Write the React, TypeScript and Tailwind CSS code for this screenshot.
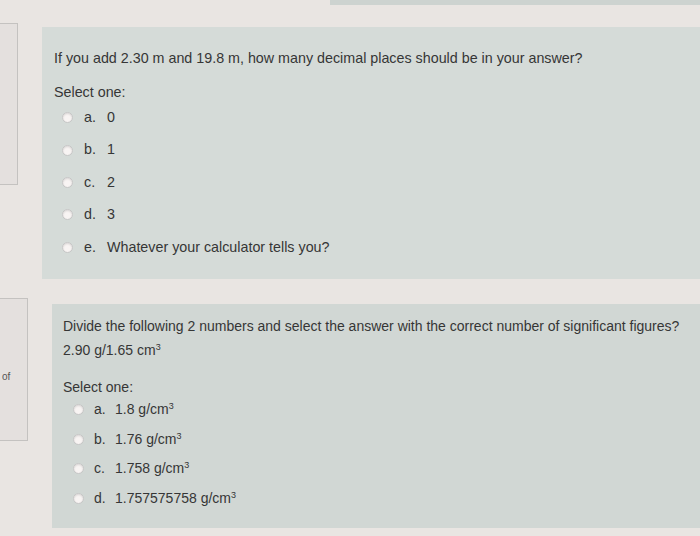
const font = { fontFamily: '"Liberation Sans", Arial, sans-serif' };

type Choice = { letter: string; text: React.ReactNode };

function Cm3({ value }: { value: string }) {
  return (
    <>
      {value} g/cm<sup className="text-[9px] relative -top-[5px]">3</sup>
    </>
  );
}

const firstChoices: Choice[] = [
  { letter: 'a.', text: '0' },
  { letter: 'b.', text: '1' },
  { letter: 'c.', text: '2' },
  { letter: 'd.', text: '3' },
  { letter: 'e.', text: 'Whatever your calculator tells you?' },
];

const secondChoices: Choice[] = [
  { letter: 'a.', text: <Cm3 value="1.8" /> },
  { letter: 'b.', text: <Cm3 value="1.76" /> },
  { letter: 'c.', text: <Cm3 value="1.758" /> },
  { letter: 'd.', text: <Cm3 value="1.757575758" /> },
];

function Radio() {
  return (
    <span className="inline-block w-[11px] h-[11px] shrink-0 rounded-full bg-[#f8f4f3] border border-[#c6c6c6] shadow-[inset_0_1px_2px_rgba(0,0,0,0.12)]" />
  );
}

function ChoiceRow({ choice, letterW }: { choice: Choice; letterW: string }) {
  return (
    <div className="flex items-center">
      <Radio />
      <span className={`${letterW} shrink-0`}>{choice.letter}</span>
      <span>{choice.text}</span>
    </div>
  );
}

export default function App() {
  return (
    <div className="w-[700px] h-[536px] overflow-hidden bg-[#e9e5e2] text-[#363636]" style={font}>
      <div className="h-[5px] ml-[330px] bg-[#cdd3d0]" />

      <div className="flex mt-[17px]">
        <div className="w-[18px] h-[162px] border border-l-0 border-[#c4c2c0] bg-[#e4e0de] mt-[1px] shrink-0" />
        <div className="ml-[24px] flex-1 h-[252px] mt-[5px] bg-[#d5dbd8] pl-[12px] pt-[21px] text-[14.3px]">
          <p>If you add 2.30 m and 19.8 m, how many decimal places should be in your answer?</p>
          <p className="mt-[13px]">Select one:</p>
          <div className="mt-[3px] flex flex-col gap-[11px] pl-[8px]">
            {firstChoices.map((c) => (
              <ChoiceRow key={c.letter} choice={c} letterW="w-[34px] pl-[11px]" />
            ))}
          </div>
        </div>
      </div>

      <div className="flex mt-[19px]">
        <div className="w-[28px] h-[143px] border border-l-0 border-[#c4c2c0] bg-[#e4e0de] shrink-0 flex items-center">
          <span className="pl-[2px] pt-[14px] text-[10px] text-[#555]">of</span>
        </div>
        <div className="ml-[24px] flex-1 h-[224px] mt-[6px] bg-[#d1d7d4] pl-[11px] pt-[12px] text-[14px]">
          <p>Divide the following 2 numbers and select the answer with the correct number of significant figures?</p>
          <p className="mt-[3px]">
            2.90 g/1.65 cm<sup className="text-[9px] relative -top-[5px]">3</sup>
          </p>
          <p className="mt-[16px]">Select one:</p>
          <div className="mt-[1px] flex flex-col gap-[8.5px] pl-[10px]">
            {secondChoices.map((c) => (
              <ChoiceRow key={c.letter} choice={c} letterW="w-[31px] pl-[10px]" />
            ))}
          </div>
        </div>
      </div>
    </div>
  );
}
